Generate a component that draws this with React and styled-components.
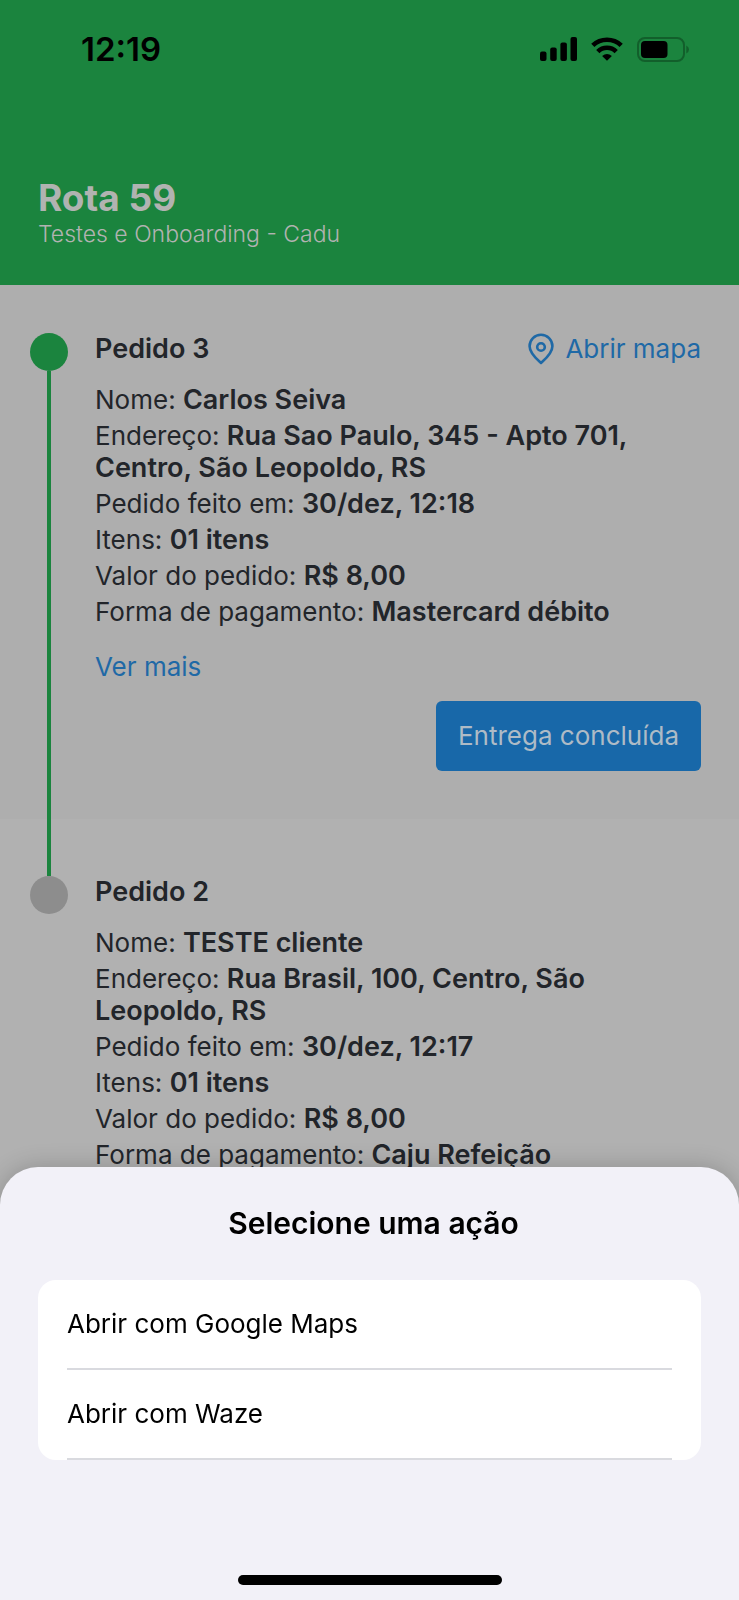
import React from "react";
import styled, { createGlobalStyle } from "styled-components";

const GlobalStyle = createGlobalStyle`
  * { box-sizing: border-box; }
  body {
    margin: 0;
    background: #b1b1b1;
    font-family: Inter, "Liberation Sans", sans-serif;
  }
  h1, h2, p { margin: 0; }
  button { font: inherit; border: 0; cursor: pointer; }
`;

const Page = styled.div`
  display: flex;
  flex-direction: column;
  min-height: 100vh;
`;

const Header = styled.header`
  background: #1b843e;
  color: #b1b3b1;
  padding: 27px 38px 36px;
`;

const StatusBar = styled.div`
  display: flex;
  align-items: center;
  justify-content: space-between;
  padding: 0 11px 0 43px;
  color: #000;
`;

const Clock = styled.time`
  font-size: 33px;
  line-height: 44px;
  font-weight: 600;
`;

const StatusIcons = styled.div`
  display: flex;
  align-items: center;
  gap: 14px;
`;

const RouteTitle = styled.h1`
  margin-top: 105px;
  font-size: 37px;
  line-height: 44px;
  font-weight: 700;
`;

const RouteSubtitle = styled.p`
  font-size: 23px;
  line-height: 29px;
  font-weight: 300;
`;

const OrderSection = styled.section`
  display: flex;
  gap: 27px;
  padding: 0 38px 0 30px;
  background: ${(p) => (p.$active ? "#aeaeae" : "#b1b1b1")};
  flex-grow: ${(p) => (p.$active ? 0 : 1)};
`;

const Rail = styled.div`
  display: flex;
  flex-direction: column;
  align-items: center;
  flex: 0 0 38px;
`;

const RailLead = styled.div`
  width: 4px;
  height: ${(p) => (p.$line ? 57 : 48)}px;
  background: ${(p) => (p.$line ? "#1b843e" : "transparent")};
`;

const Dot = styled.div`
  width: 38px;
  height: 38px;
  border-radius: 50%;
  background: ${(p) => (p.$active ? "#1b843e" : "#8d8d8d")};
`;

const RailTail = styled.div`
  width: 4px;
  flex: 1;
  background: #1b843e;
`;

const OrderBody = styled.div`
  flex: 1;
  display: flex;
  flex-direction: column;
  padding: ${(p) => (p.$active ? 48 : 57)}px 0 48px;
  font-size: 26px;
  line-height: 32px;
  color: #22252a;
`;

const OrderHead = styled.div`
  display: flex;
  justify-content: space-between;
  margin-bottom: 19px;
`;

const OrderTitle = styled.h2`
  font-size: 27px;
  line-height: 32px;
  font-weight: 600;
`;

const TextLink = styled.a`
  display: flex;
  align-items: center;
  gap: 11px;
  align-self: flex-start;
  color: #1f69a6;
  text-decoration: none;
`;

const Details = styled.div`
  display: flex;
  flex-direction: column;
  gap: 4px;
  margin-bottom: 23px;
`;

const Value = styled.strong`
  font-size: 27px;
  font-weight: 600;
`;

const DoneButton = styled.button`
  align-self: flex-end;
  margin-top: 18px;
  padding: 19px 22px;
  border-radius: 6px;
  background: #1868a9;
  color: #aebbc6;
`;

const Sheet = styled.div`
  position: fixed;
  left: 0;
  right: 0;
  bottom: 0;
  display: flex;
  flex-direction: column;
  padding: 38px 38px 15px;
  border-radius: 38px 38px 0 0;
  background: #f2f1f8;
  color: #000;
  box-shadow: 0 0 24px rgba(0, 0, 0, 0.2);
`;

const SheetTitle = styled.h2`
  margin-bottom: 39px;
  padding-left: 8px;
  text-align: center;
  font-size: 30px;
  line-height: 36px;
  font-weight: 600;
`;

const ActionList = styled.div`
  padding: 0 29px;
  border-radius: 18px;
  background: #fff;
`;

const Action = styled.button`
  display: block;
  width: 100%;
  padding: 28px 0;
  border-bottom: 2px solid #d9dadf;
  background: none;
  text-align: left;
  font-size: 26px;
  line-height: 32px;
  color: #000;
`;

const HomeIndicator = styled.div`
  align-self: center;
  width: 264px;
  height: 10px;
  margin-top: 115px;
  border-radius: 5px;
  background: #000;
`;

const SignalIcon = () => (
  <svg width="37" height="24" viewBox="0 0 37 24" aria-hidden="true">
    <rect x="0" y="14.5" width="6.5" height="9.5" rx="2" />
    <rect x="10.2" y="10.5" width="6.5" height="13.5" rx="2" />
    <rect x="20.4" y="5.5" width="6.5" height="18.5" rx="2" />
    <rect x="30.5" y="0" width="6.5" height="24" rx="2" />
  </svg>
);

const WifiIcon = () => (
  <svg width="32" height="24" viewBox="0 0 32 24" aria-hidden="true">
    <g fill="none" stroke="#000" strokeWidth="4.6">
      <path d="M1.8 8.4A20.5 20.5 0 0 1 30.2 8.4" />
      <path d="M6.8 14.6A13 13 0 0 1 25.2 14.6" />
    </g>
    <path d="M16 23.8L11.1 18.9Q16 14.9 20.9 18.9Z" />
  </svg>
);

const BatteryIcon = () => (
  <svg width="53" height="25" viewBox="0 0 53 25" aria-hidden="true">
    <rect x="1" y="1" width="46" height="23" rx="7" fill="none" stroke="#125f2b" strokeWidth="2" />
    <rect x="4" y="4" width="26.5" height="17" rx="4" />
    <path d="M49.3 8.5Q52 9.8 52 12.5T49.3 16.5Z" fill="#125f2b" />
  </svg>
);

const PinIcon = () => (
  <svg width="26" height="32" viewBox="0 0 26 32" fill="none" stroke="currentColor" strokeWidth="2.6" strokeLinejoin="round" aria-hidden="true">
    <path d="M13 30C10 27.2 1.6 20.4 1.6 13.2A11.4 11.4 0 0 1 24.4 13.2C24.4 20.4 16 27.2 13 30Z" />
    <circle cx="13" cy="14" r="3.8" />
  </svg>
);

const orders = [
  {
    title: "Pedido 3",
    active: true,
    details: [
      ["Nome", "Carlos Seiva"],
      ["Endereço", "Rua Sao Paulo, 345 - Apto 701, Centro, São Leopoldo, RS"],
      ["Pedido feito em", "30/dez, 12:18"],
      ["Itens", "01 itens"],
      ["Valor do pedido", "R$ 8,00"],
      ["Forma de pagamento", "Mastercard débito"],
    ],
  },
  {
    title: "Pedido 2",
    active: false,
    details: [
      ["Nome", "TESTE cliente"],
      ["Endereço", "Rua Brasil, 100, Centro, São Leopoldo, RS"],
      ["Pedido feito em", "30/dez, 12:17"],
      ["Itens", "01 itens"],
      ["Valor do pedido", "R$ 8,00"],
      ["Forma de pagamento", "Caju Refeição"],
    ],
  },
];

const Order = ({ title, active, details }) => (
  <OrderSection $active={active}>
    <Rail>
      <RailLead $line={!active} />
      <Dot $active={active} />
      {active && <RailTail />}
    </Rail>
    <OrderBody $active={active}>
      <OrderHead>
        <OrderTitle>{title}</OrderTitle>
        {active && (
          <TextLink href="#mapa">
            <PinIcon />
            Abrir mapa
          </TextLink>
        )}
      </OrderHead>
      <Details>
        {details.map(([label, value]) => (
          <p key={label}>
            {label}: <Value>{value}</Value>
          </p>
        ))}
      </Details>
      {active && (
        <>
          <TextLink href="#detalhes">Ver mais</TextLink>
          <DoneButton type="button">Entrega concluída</DoneButton>
        </>
      )}
    </OrderBody>
  </OrderSection>
);

export default function App() {
  return (
    <>
      <GlobalStyle />
      <Page>
        <Header>
          <StatusBar>
            <Clock>12:19</Clock>
            <StatusIcons>
              <SignalIcon />
              <WifiIcon />
              <BatteryIcon />
            </StatusIcons>
          </StatusBar>
          <RouteTitle>Rota 59</RouteTitle>
          <RouteSubtitle>Testes e Onboarding - Cadu</RouteSubtitle>
        </Header>
        {orders.map((order) => (
          <Order key={order.title} {...order} />
        ))}
      </Page>
      <Sheet role="dialog" aria-labelledby="sheet-title">
        <SheetTitle id="sheet-title">Selecione uma ação</SheetTitle>
        <ActionList>
          <Action type="button">Abrir com Google Maps</Action>
          <Action type="button">Abrir com Waze</Action>
        </ActionList>
        <HomeIndicator />
      </Sheet>
    </>
  );
}
